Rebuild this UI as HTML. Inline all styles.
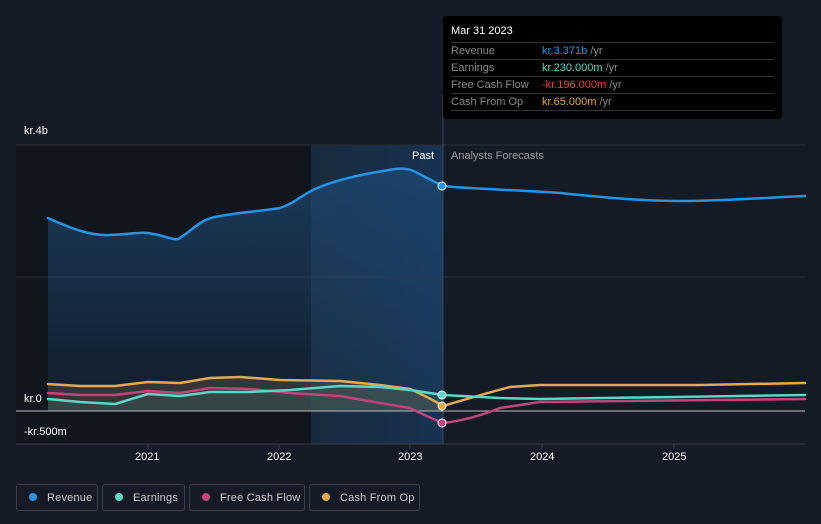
<!DOCTYPE html>
<html><head><style>
body{margin:0;width:821px;height:524px;background:#151b26;font-family:"Liberation Sans",sans-serif;overflow:hidden;position:relative}
.t{position:absolute;font-size:11px;color:#fff}
.tip{position:absolute;left:443px;top:16px;width:339px;height:103px;background:#000;border-radius:3px}
.tip .h{position:absolute;left:8px;top:9px;color:#fff;font-size:11px}
.row{position:absolute;left:8px;width:323px;border-top:1px solid #333;height:17px;font-size:11px;color:#888;line-height:17px}
.row span.v{position:absolute;left:91px}
.leg{position:absolute;top:484px;height:27px;border:1px solid #3a3f4a;border-radius:3px;font-size:11px;letter-spacing:0.2px;color:#ccc;line-height:27px;box-sizing:border-box;white-space:nowrap}
.leg i{display:inline-block;width:8px;height:8px;border-radius:50%;margin:0 10px 0 12px;vertical-align:0px}
</style></head><body>
<svg width="821" height="524" style="position:absolute;left:0;top:0">
<defs>
<linearGradient id="hl" x1="0" x2="1"><stop offset="0" stop-color="#1a2a3c"/><stop offset="1" stop-color="#173252"/></linearGradient>
<linearGradient id="ra" x1="0" y1="0" x2="0" y2="1"><stop offset="0" stop-color="#1d4a75" stop-opacity=".7"/><stop offset="1" stop-color="#1d4a75" stop-opacity=".15"/></linearGradient>
</defs>
<rect x="16" y="145" width="295" height="299" fill="#11151d"/>
<rect x="311" y="145" width="132" height="299" fill="url(#hl)"/>
<line x1="16" y1="145" x2="805" y2="145" stroke="#2a303b"/>
<line x1="16" y1="277" x2="805" y2="277" stroke="#2a303b"/>
<line x1="16" y1="444" x2="805" y2="444" stroke="#3a3f4a"/>
<line x1="443" y1="95" x2="443" y2="444" stroke="#3a4a5e"/>
<path d="M48,218 C70,228 90,236 110,235 C130,234 140,232 148,233 C165,235 175,242 180,238 C195,228 200,220 215,217 C240,212 255,212 280,208 C295,203 300,196 315,189 C340,178 370,173 395,169 C410,167 415,172 425,177 L443,186 L443,411 L48,411 Z" fill="url(#ra)"/>
<path d="M48,384 L80,386 L115,386 L148,382 L180,383 L210,378 L240,377 L280,380 L340,381 L380,385 L410,389 L443,406 L443,411 L48,411Z" fill="#5a5040" opacity=".45"/>
<path d="M48,399 L80,402 L115,404 L148,394 L180,396 L210,392 L250,392 L290,390 L340,386 L380,387 L410,390 L443,395 L443,411 L48,411Z" fill="#3a6060" opacity=".4"/>
<line x1="16" y1="411" x2="805" y2="411" stroke="#bbb" stroke-width="1"/>
<g fill="none" stroke-width="2.5" stroke-linejoin="round" stroke-linecap="round">
<path stroke="#2394e6" d="M48,218 C70,228 90,236 110,235 C130,234 140,232 148,233 C165,235 175,242 180,238 C195,228 200,220 215,217 C240,212 255,212 280,208 C295,203 300,196 315,189 C340,178 370,173 395,169 C410,167 415,172 425,177 L443,186 C470,189 520,190 560,193 C600,197 640,201 680,201 C720,201 760,198 805,196"/>
<path stroke="#e6a94f" d="M48,384 L80,386 L115,386 L148,382 L180,383 L210,378 L240,377 L280,380 L340,381 L380,385 L410,389 Q430,398 443,406 Q480,395 510,387 L540,385 L700,385 L805,383"/>
<path stroke="#c3447c" d="M48,393 L80,395 L115,395 L148,391 L180,393 L210,388 L250,389 L290,393 L340,396 L380,403 L410,408 Q430,418 443,423 Q470,420 500,408 L540,402 L805,399"/>
<path stroke="#5ad7c6" d="M48,399 L80,402 L115,404 L148,394 L180,396 L210,392 L250,392 L290,390 L340,386 L380,387 L410,390 L443,395 L500,398 L540,399 L805,395"/>
</g>
<g stroke="#fff" stroke-width="1">
<circle cx="442" cy="186" r="4" fill="#2394e6"/>
<circle cx="442" cy="395" r="4" fill="#5ad7c6"/>
<circle cx="442" cy="406" r="4" fill="#e6a94f"/>
<circle cx="442" cy="423" r="4" fill="#c3447c"/>
</g>
<g stroke="#3a3f4a"><line x1="148" y1="444" x2="148" y2="449"/><line x1="279" y1="444" x2="279" y2="449"/><line x1="410" y1="444" x2="410" y2="449"/><line x1="542" y1="444" x2="542" y2="449"/><line x1="674" y1="444" x2="674" y2="449"/></g>
</svg>
<div class="t" style="left:24px;top:125px">kr.4b</div>
<div class="t" style="left:24px;top:393px">kr.0</div>
<div class="t" style="left:24px;top:426px">-kr.500m</div>
<div class="t" style="left:412px;top:150px">Past</div>
<div class="t" style="left:451px;top:150px;color:#999">Analysts Forecasts</div>
<div class="t" style="left:135px;top:451px">2021</div>
<div class="t" style="left:267px;top:451px">2022</div>
<div class="t" style="left:398px;top:451px">2023</div>
<div class="t" style="left:530px;top:451px">2024</div>
<div class="t" style="left:662px;top:451px">2025</div>
<div class="tip"><div class="h">Mar 31 2023</div>
<div class="row" style="top:26px">Revenue<span class="v"><span style="color:#2394e6">kr.3.371b</span> /yr</span></div>
<div class="row" style="top:43px">Earnings<span class="v"><span style="color:#5ad7c6">kr.230.000m</span> /yr</span></div>
<div class="row" style="top:60px">Free Cash Flow<span class="v"><span style="color:#e64040">-kr.196.000m</span> /yr</span></div>
<div class="row" style="top:77px">Cash From Op<span class="v"><span style="color:#e6a94f">kr.65.000m</span> /yr</span></div>
<div class="row" style="top:94px;height:0"></div>
</div>
<div class="leg" style="left:16px;width:82px"><i style="background:#2394e6"></i>Revenue</div>
<div class="leg" style="left:102px;width:83px"><i style="background:#5ad7c6"></i>Earnings</div>
<div class="leg" style="left:189px;width:116px"><i style="background:#c3447c"></i>Free Cash Flow</div>
<div class="leg" style="left:309px;width:111px"><i style="background:#e6a94f"></i>Cash From Op</div>
</body></html>
